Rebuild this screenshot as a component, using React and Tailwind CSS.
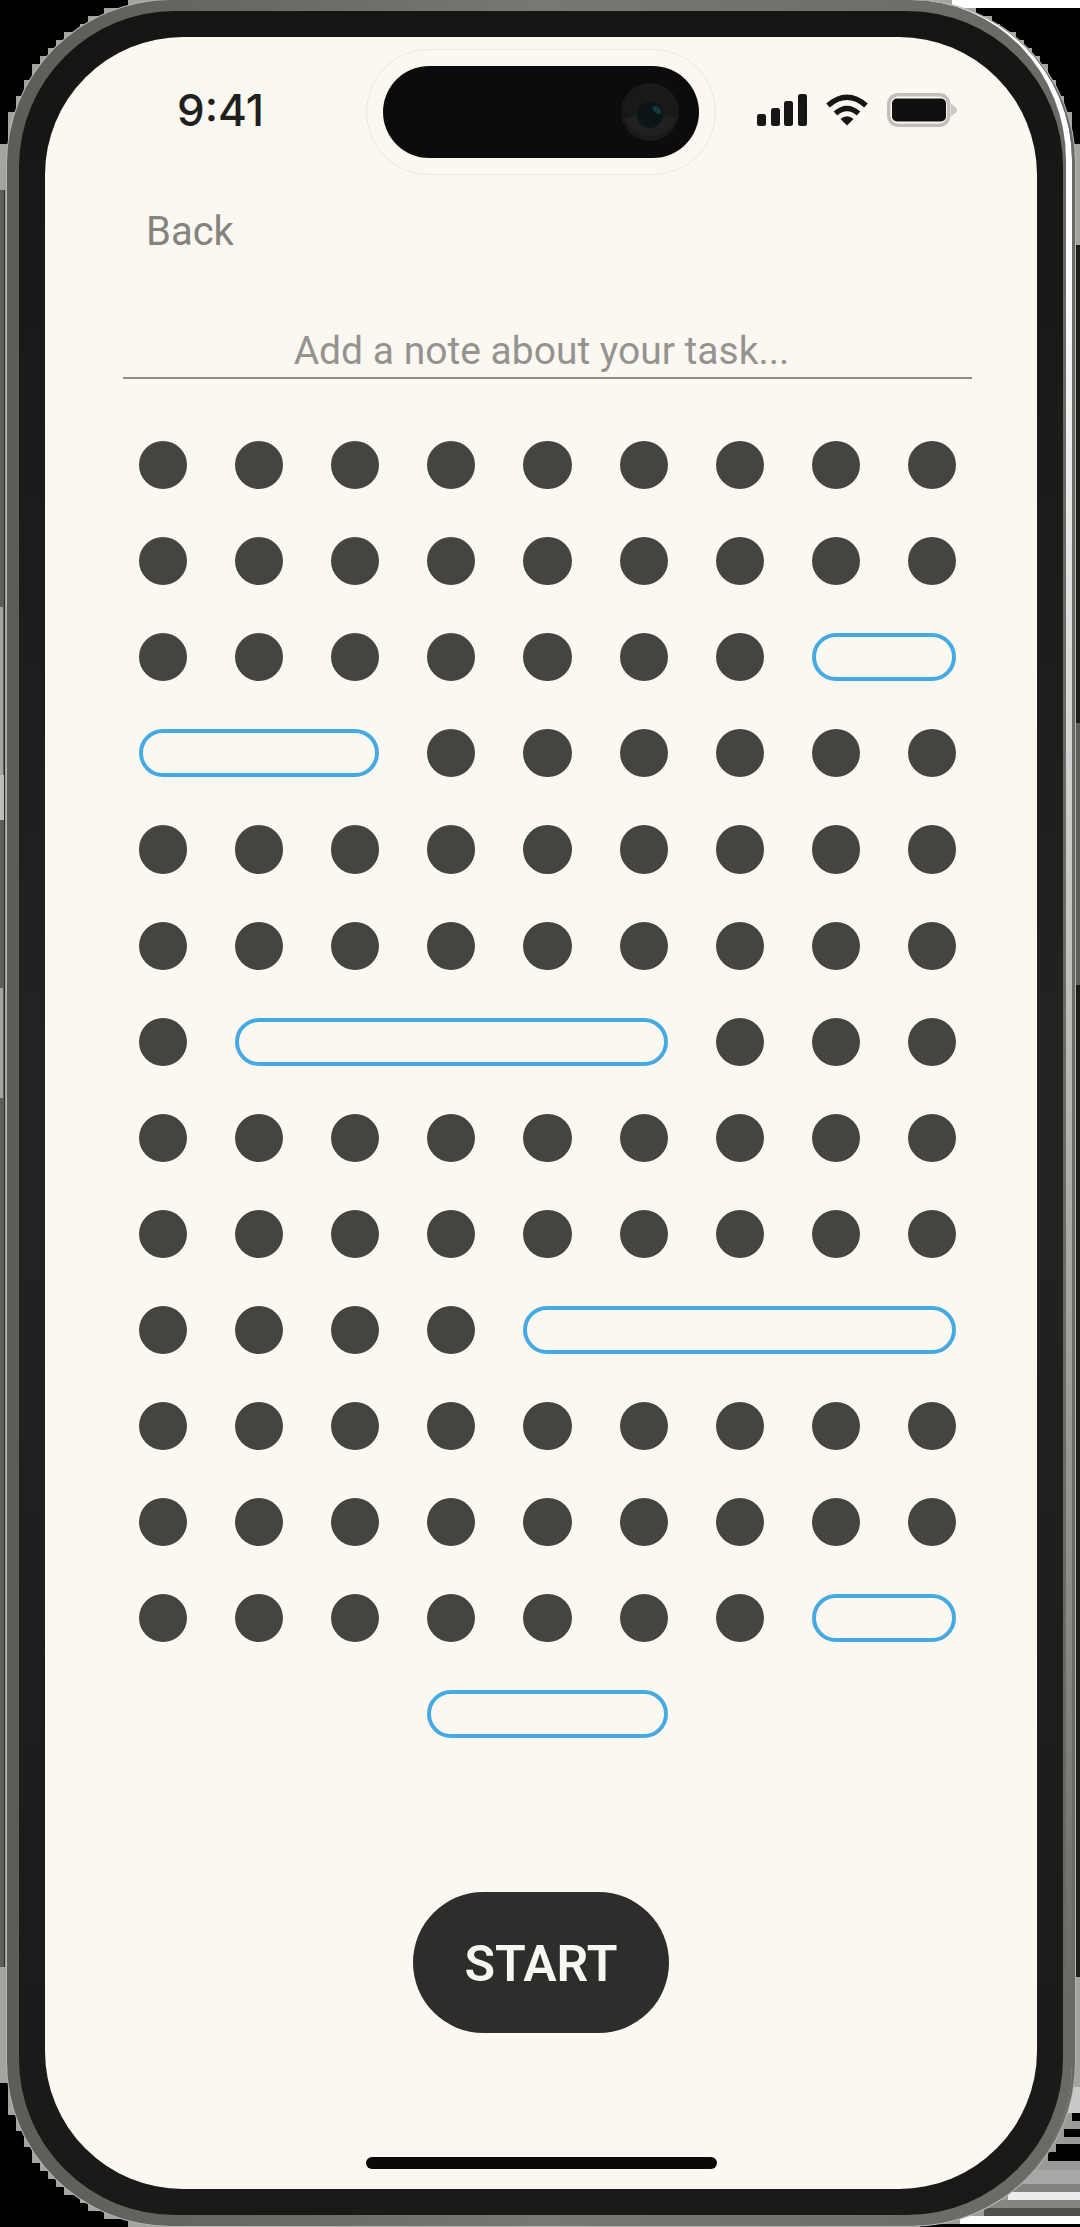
const SPAN = {
  1: "col-span-1",
  2: "col-span-2",
  3: "col-span-3",
  5: "col-span-5",
};

const FULL = Array(9).fill(1);

// Each row lists the column spans of its marks: 1 is a dot, more is an open slot.
const ROWS = [
  FULL,
  FULL,
  [1, 1, 1, 1, 1, 1, 1, 2],
  [3, 1, 1, 1, 1, 1, 1],
  FULL,
  FULL,
  [1, 5, 1, 1, 1],
  FULL,
  FULL,
  [1, 1, 1, 1, 5],
  FULL,
  FULL,
  [1, 1, 1, 1, 1, 1, 1, 2],
];

function Dot() {
  return <div className="aspect-square rounded-full bg-[#45453f]" />;
}

function Slot({ className }) {
  return <div className={`h-full min-h-12 rounded-full border-4 border-[#45aae3] ${className}`} />;
}

function DotBoard() {
  return (
    <div className="grid grid-cols-9 gap-12">
      {ROWS.map((row, r) =>
        row.map((span, c) =>
          span === 1 ? <Dot key={`${r}-${c}`} /> : <Slot key={`${r}-${c}`} className={SPAN[span]} />
        )
      )}
      <Slot className="col-span-3 col-start-4" />
    </div>
  );
}

function StatusIcons() {
  return (
    <div className="flex items-center gap-[19px]">
      <svg width="50" height="32" viewBox="0 0 50 32" fill="#161614" aria-hidden="true">
        <rect x="0" y="20" width="9" height="12" rx="2.5" />
        <rect x="14" y="14" width="9" height="18" rx="2.5" />
        <rect x="27" y="7" width="9" height="25" rx="2.5" />
        <rect x="41" y="0" width="9" height="32" rx="2.5" />
      </svg>
      <svg width="42" height="32" viewBox="0 0 42 32" fill="none" stroke="#161614" strokeWidth="5.5" aria-hidden="true">
        <path d="M2 11.5Q21 -5 40 11.5" />
        <path d="M9.5 19.5Q21 9.500 32.500 19.5" />
        <path d="M21 31.5L14.5 25Q21 19.5 27.5 25Z" fill="#161614" stroke="none" />
      </svg>
      <svg width="70" height="34" viewBox="0 0 70 34" aria-hidden="true">
        <rect x="1.75" y="1.75" width="60" height="30.5" rx="9.5" fill="none" stroke="#c3c0bb" strokeWidth="3.5" />
        <rect x="5" y="5.5" width="54" height="23" rx="5" fill="#10100e" />
        <path d="M64 11Q70 14 70 17T64 23Z" fill="#cbc7c3" />
      </svg>
    </div>
  );
}

function Camera() {
  return (
    <svg width="58" height="58" viewBox="0 0 58 58" aria-hidden="true">
      <circle cx="29" cy="29" r="29" fill="#191919" />
      <path d="M3 36L17 32A13 13 0 0 0 41 32L56 36A29 29 0 0 1 3 36Z" fill="#212122" />
      <circle cx="29" cy="32" r="13" fill="#0b1417" />
      <ellipse cx="36" cy="27" rx="5" ry="3" fill="#163a3c" transform="rotate(40 36 27)" />
    </svg>
  );
}

function CornerSteps({ className }) {
  return (
    <svg
      className={`absolute ${className}`}
      width="128"
      height="144"
      viewBox="0 0 128 144"
      aria-hidden="true"
    >
      <path d="M0 0H128V8H104V16H88V24H80V32H64V40H56V48H48V56H40V64H32V80H24V96H16V112H8V144H0Z" fill="#000" />
    </svg>
  );
}

function CornerStreaks() {
  return (
    <svg className="absolute right-0 bottom-0" width="160" height="140" viewBox="0 0 160 140" aria-hidden="true">
      <rect width="160" height="140" fill="#9a9a98" />
      <rect x="140" width="20" height="26" fill="#c9c9c7" />
      <rect x="152" y="26" width="8" height="8" />
      <rect x="144" y="42" width="16" height="8" />
      <rect x="136" y="57" width="24" height="8" />
      <rect x="128" y="65" width="32" height="9" />
      <rect x="100" y="83" width="60" height="14" fill="#a9a7a9" />
      <rect x="80" y="97" width="80" height="8" fill="#82827f" />
      <rect x="88" y="105" width="72" height="8" fill="#ededeb" />
      <rect x="64" y="113" width="96" height="8" fill="#858582" />
      <rect x="64" y="121" width="96" height="8" fill="#50504c" />
      <rect x="40" y="129" width="120" height="8" fill="#fff" />
      <rect y="137" width="160" height="3" />
    </svg>
  );
}

export default function App() {
  return (
    <div className="relative overflow-hidden bg-[#a3a3a0] pr-[5px] pb-px pl-[7px] font-[Roboto,sans-serif]">
      <div className="absolute top-[190px] bottom-[260px] left-0 w-[5px] border-r border-[#2a2a28] bg-[#5c5c59]" />
      <div className="absolute top-[245px] right-0 bottom-[250px] w-1 bg-[#1c1c1a]" />
      <div className="absolute top-[607px] left-0 h-[168px] w-[3px] bg-[#a5a5a2]" />
      <div className="absolute top-[775px] left-0 h-[45px] w-1 bg-[#bdbdba]" />
      <div className="absolute top-[988px] left-0 h-[110px] w-[3px] bg-[#a5a5a2]" />
      <div className="absolute top-[723px] right-0 h-[262px] w-1 bg-[#5f5e5a]" />
      <CornerSteps className="top-0 left-0" />
      <CornerSteps className="top-0 right-0 -scale-x-100" />
      <CornerSteps className="bottom-0 left-0 -scale-y-100" />
      <CornerStreaks />
      <div className="absolute top-0 right-0 h-2 w-32 bg-white" />

      <div className="relative rounded-[164px] bg-[#74736f] bg-linear-to-r from-[#5d5c59] via-[#787773] to-[#6a6966] px-3 py-[11px] shadow-[0_0_0_1px_#b5b5b2]">
        <div className="absolute inset-y-0 right-[3px] left-0 rounded-[160px] border-r-[6px] border-white mask-linear-180 mask-linear-from-10% mask-linear-to-90%" />
        <div className="relative rounded-[156px] bg-[#1a1a18] bg-linear-to-b from-[#151513] via-[#232321] to-[#191917] p-[26px]">
          <main className="flex flex-col rounded-[138px] bg-[#fbf8f1] pt-[29px] pb-5">
            <header className="grid grid-cols-[1fr_316px_1fr] items-center">
              <time className="pl-[132px] pb-1 font-[Inter,sans-serif] text-[44px] leading-12 font-medium text-[#20201e]">
                9:41
              </time>
              <div className="flex h-[92px] items-center justify-end rounded-full bg-[#0c0c0c] pr-5 outline-1 outline-offset-[16px] outline-[#eae8e3]">
                <Camera />
              </div>
              <div className="flex justify-end pr-20 pb-1">
                <StatusIcons />
              </div>
            </header>

            <div className="mt-[50px] pl-[101px]">
              <button type="button" className="block text-[40px] leading-12 text-[#85837e]">
                Back
              </button>
            </div>

            <div className="mt-[69px] pr-[65px] pl-[78px]">
              <input
                type="text"
                aria-label="Task note"
                placeholder="Add a note about your task..."
                className="block h-[54px] w-full border-b-2 border-[#8d8c88] bg-transparent pr-3 text-center text-[39px] text-[#45453f] outline-none placeholder:text-[#95938f]"
              />
              <div className="mt-[62px] px-4">
                <DotBoard />
              </div>
            </div>

            <button
              type="button"
              className="mt-[154px] h-[141px] w-64 self-center rounded-full bg-[#2d2d2c] pt-1 text-[50px] font-semibold text-[#f7f6f2]"
            >
              START
            </button>

            <div className="mt-[124px] h-3 w-[351px] self-center rounded-full bg-[#0a0a06]" />
          </main>
        </div>
      </div>
    </div>
  );
}
